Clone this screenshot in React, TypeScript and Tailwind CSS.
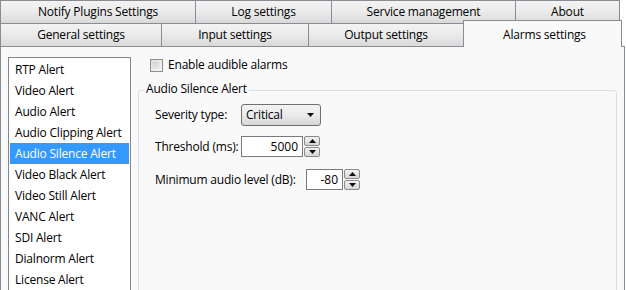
import React from 'react';

const topTabs = [
    { label: 'Notify Plugins Settings', w: 'w-[196px]' },
    { label: 'Log settings', w: 'w-[137px]' },
    { label: 'Service management', w: 'w-[185px]' },
    { label: 'About', w: 'w-[105px]' },
];

const bottomTabs = [
    { label: 'General settings', w: 'w-[162px]' },
    { label: 'Input settings', w: 'w-[148px]' },
    { label: 'Output settings', w: 'w-[156px]' },
];

const alerts = [
    'RTP Alert',
    'Video Alert',
    'Audio Alert',
    'Audio Clipping Alert',
    'Audio Silence Alert',
    'Video Black Alert',
    'Video Still Alert',
    'VANC Alert',
    'SDI Alert',
    'Dialnorm Alert',
    'License Alert',
];

const Spinner = () => (
    <div className="flex flex-col w-[16px] h-[21px] gap-[1px]">
        <div className="flex-1 flex items-center justify-center border border-[#8b8b8b] rounded-[2px] bg-gradient-to-b from-[#f2f2f2] to-[#d6d6d6]">
            <svg width="7" height="4" viewBox="0 0 7 4"><path d="M0 4 L3.5 0 L7 4 Z" fill="#111" /></svg>
        </div>
        <div className="flex-1 flex items-center justify-center border border-[#8b8b8b] rounded-[2px] bg-gradient-to-b from-[#f2f2f2] to-[#d6d6d6]">
            <svg width="7" height="4" viewBox="0 0 7 4"><path d="M0 0 L7 0 L3.5 4 Z" fill="#111" /></svg>
        </div>
    </div>
);

const App = () => {
    return (
        <div className="w-[626px] h-[290px] overflow-hidden bg-white text-[12px] text-black font-['Open_Sans',sans-serif] leading-none">
            {/* Tab rows */}
            <div className="flex h-[23px]">
                {topTabs.map((t) => (
                    <div key={t.label} className={`${t.w} shrink-0 flex items-center justify-center border border-[#898c95] border-b-0 -ml-[1px] first:ml-0 bg-gradient-to-b from-[#f3f3f3] via-[#ebebeb] to-[#d9d9d9] tracking-[-0.2px]`}>
                        {t.label}
                    </div>
                ))}
            </div>
            <div className="flex h-[23px] items-end relative z-10">
                {bottomTabs.map((t) => (
                    <div key={t.label} className={`${t.w} h-[23px] shrink-0 flex items-center justify-center border border-[#898c95] border-b-0 -ml-[1px] first:ml-0 bg-gradient-to-b from-[#f3f3f3] via-[#ebebeb] to-[#d9d9d9] tracking-[-0.2px]`}>
                        {t.label}
                    </div>
                ))}
                <div className="w-[159px] h-[27px] -mb-[1px] -ml-[1px] shrink-0 flex items-start pt-[8px] pl-[4px] justify-center border border-[#898c95] border-b-0 bg-[#f9f9f9] tracking-[-0.2px]">
                    Alarms settings
                </div>
            </div>

            {/* Panel */}
            <div className="w-[625px] h-[260px] border border-[#898c95] bg-[#f9f9f9] flex pl-[7px] pt-[10px] gap-[7px]">
                <div className="w-[123px] h-[260px] shrink-0 border border-[#828790] bg-white px-[1px] pt-[1px]">
                    {alerts.map((a) => (
                        <div
                            key={a}
                            className={`h-[21px] flex items-center pl-[5px] tracking-[-0.2px] ${a === 'Audio Silence Alert' ? 'bg-[#3399ff] text-white' : ''}`}
                        >
                            {a}
                        </div>
                    ))}
                </div>

                <div className="flex-1 pr-[7px]">
                    <div className="flex items-center gap-[5px] pl-[12px] pt-[2px] h-[14px]">
                        <div className="w-[13px] h-[13px] border border-[#8e8f8f] bg-gradient-to-br from-[#dcdcdc] to-[#f8f8f8] p-[2px]">
                            <div className="w-full h-full bg-gradient-to-br from-[#cfcfcf] to-[#f0f0f0]" />
                        </div>
                        <span className="tracking-[-0.2px]">Enable audible alarms</span>
                    </div>

                    <div className="relative mt-[19px] h-[220px] border border-[#d5dfe5] rounded-[3px]">
                        <span className="absolute -top-[8px] left-[5px] bg-[#f9f9f9] px-[2px] tracking-[-0.2px]">Audio Silence Alert</span>

                        <div className="pl-[16px] pt-[13px] flex flex-col">
                            <div className="flex items-center h-[22px]">
                                <span className="w-[86px] tracking-[-0.2px]">Severity type:</span>
                                <div className="w-[80px] h-[22px] border border-[#707070] rounded-[3px] bg-gradient-to-b from-[#f2f2f2] via-[#ebebeb] to-[#d6d6d6] flex items-center justify-between pl-[4px] pr-[6px]">
                                    <span className="tracking-[-0.2px]">Critical</span>
                                    <svg width="7" height="4" viewBox="0 0 7 4"><path d="M0 0 L7 0 L3.5 4 Z" fill="#111" /></svg>
                                </div>
                            </div>

                            <div className="flex items-center h-[21px] mt-[10px]">
                                <span className="w-[86px] tracking-[-0.2px]">Threshold (ms):</span>
                                <div className="w-[62px] h-[21px] border border-[#7a7a7a] bg-white flex items-center justify-end pr-[4px]">5000</div>
                                <div className="ml-[1px]"><Spinner /></div>
                            </div>

                            <div className="flex items-center h-[21px] mt-[12px]">
                                <span className="w-[151px] tracking-[-0.2px]">Minimum audio level (dB):</span>
                                <div className="w-[37px] h-[21px] border border-[#7a7a7a] bg-white flex items-center justify-end pr-[4px]">-80</div>
                                <div className="ml-[1px]"><Spinner /></div>
                            </div>
                        </div>
                    </div>
                </div>
            </div>
        </div>
    );
};

export default App;
